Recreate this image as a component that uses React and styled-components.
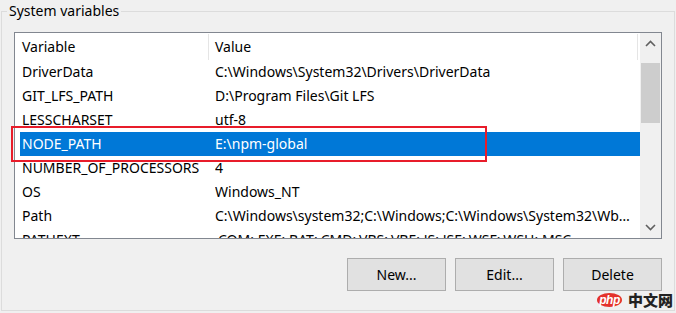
import React from 'react';
import styled, { createGlobalStyle } from 'styled-components';

const GlobalStyle = createGlobalStyle`
  html, body {
    margin: 0;
    padding: 0;
    background: #f0f0f0;
  }
  body {
    font-family: "Noto Sans", "Open Sans", sans-serif;
    font-size: 14px;
    color: #000;
  }
`;

const variables = [
  { name: 'DriverData', value: 'C:\\Windows\\System32\\Drivers\\DriverData' },
  { name: 'GIT_LFS_PATH', value: 'D:\\Program Files\\Git LFS' },
  { name: 'LESSCHARSET', value: 'utf-8' },
  { name: 'NODE_PATH', value: 'E:\\npm-global', selected: true },
  { name: 'NUMBER_OF_PROCESSORS', value: '4' },
  { name: 'OS', value: 'Windows_NT' },
  { name: 'Path', value: 'C:\\Windows\\system32;C:\\Windows;C:\\Windows\\System32\\Wbem;C:\\Windows\\System32\\WindowsPowerShell\\v1.0\\' },
  { name: 'PATHEXT', value: '.COM;.EXE;.BAT;.CMD;.VBS;.VBE;.JS;.JSE;.WSF;.WSH;.MSC' },
];

const Chevron = ({ up }) => (
  <svg width="11" height="7" viewBox="0 0 11 7">
    <polyline
      points={up ? '1,6 5.5,1.5 10,6' : '1,1 5.5,5.5 10,1'}
      fill="none"
      stroke="#606060"
      strokeWidth="1.6"
    />
  </svg>
);

export default function App() {
  return (
    <Page>
      <GlobalStyle />
      <GroupBox>
        <Legend>System variables</Legend>
        <Content>
          <ListBox>
            <Table>
              <HeaderRow>
                <HeaderCell width={194} pad={7}>Variable</HeaderCell>
                <HeaderCell width={429} pad={6}>Value</HeaderCell>
              </HeaderRow>
              {variables.map(v => (
                <Row key={v.name} selected={v.selected}>
                  <NameCell>{v.name}</NameCell>
                  <ValueCell>{v.value}</ValueCell>
                </Row>
              ))}
            </Table>
            <ScrollBar>
              <ScrollArrow><Chevron up /></ScrollArrow>
              <Track>
                <Thumb />
              </Track>
              <ScrollArrow><Chevron /></ScrollArrow>
            </ScrollBar>
          </ListBox>
          <Buttons>
            <Button>New...</Button>
            <Button>Edit...</Button>
            <Button>Delete</Button>
          </Buttons>
        </Content>
      </GroupBox>
      <Highlight />
      <Watermark>
        <PhpLogo>php</PhpLogo>
        <WatermarkText>中文网</WatermarkText>
      </Watermark>
    </Page>
  );
}

const Page = styled.div`
  position: relative;
  box-sizing: border-box;
  width: 676px;
  height: 313px;
  padding: 1px 1px 0;
  overflow: hidden;
`;

const GroupBox = styled.fieldset`
  margin: 0;
  min-width: 0;
  padding: 11px 12px 19px;
  border: 1px solid #dcdcdc;
`;

const Legend = styled.legend`
  margin-left: -7px;
  padding: 0 2px;
  line-height: 20px;
  font-size: 14px;
  color: #000;
`;

const Content = styled.div`
  display: flex;
  flex-direction: column;
  gap: 19px;
`;

const ListBox = styled.div`
  display: flex;
  box-sizing: border-box;
  height: 207px;
  border: 1px solid #828790;
  background: #fff;
  overflow: hidden;
`;

const Table = styled.div`
  flex: 1;
  min-width: 0;
  overflow: hidden;
`;

const HeaderRow = styled.div`
  display: flex;
  height: 27px;
`;

const HeaderCell = styled.div`
  box-sizing: border-box;
  width: ${p => p.width}px;
  height: 26px;
  margin-top: 1px;
  padding-left: ${p => p.pad}px;
  line-height: 26px;
  border-right: 1px solid #e5e5e5;
  white-space: nowrap;
`;

const Row = styled.div`
  display: flex;
  height: 24px;
  margin-left: 5px;
  line-height: 24px;
  white-space: nowrap;
  background: ${p => (p.selected ? '#0078d7' : 'transparent')};
  color: ${p => (p.selected ? '#fff' : '#000')};
`;

const NameCell = styled.div`
  box-sizing: border-box;
  flex: 0 0 195px;
  padding-left: 2px;
  overflow: hidden;
`;

const ValueCell = styled.div`
  flex: 1;
  min-width: 0;
  padding-right: 6px;
  overflow: hidden;
  text-overflow: ellipsis;
`;

const ScrollBar = styled.div`
  display: flex;
  flex-direction: column;
  flex: 0 0 21px;
  background: #f0f0f0;
`;

const ScrollArrow = styled.div`
  display: flex;
  align-items: center;
  justify-content: center;
  height: 21px;
`;

const Track = styled.div`
  flex: 1;
`;

const Thumb = styled.div`
  height: 60px;
  margin: 9px 1px 0;
  background: #cdcdcd;
`;

const Buttons = styled.div`
  display: flex;
  justify-content: flex-end;
  gap: 9px;
`;

const Button = styled.button`
  box-sizing: border-box;
  width: 99px;
  height: 33px;
  padding: 0;
  border: 1px solid #adadad;
  background: #e1e1e1;
  font-family: "Noto Sans", "Open Sans", sans-serif;
  font-size: 14px;
  color: #000;
`;

const Highlight = styled.div`
  position: absolute;
  left: 11px;
  top: 126px;
  box-sizing: border-box;
  width: 476px;
  height: 36px;
  border: 2px solid #e81c2a;
`;

const Watermark = styled.div`
  position: absolute;
  right: 3px;
  bottom: 6px;
  display: flex;
  align-items: center;
  gap: 6px;
`;

const PhpLogo = styled.span`
  display: inline-flex;
  align-items: center;
  justify-content: center;
  width: 25px;
  height: 14px;
  border-radius: 50%;
  background: #e4322b;
  color: #fff;
  font-family: "Liberation Sans", Arial, sans-serif;
  font-size: 12px;
  font-weight: 700;
  font-style: italic;
  letter-spacing: -0.5px;
`;

const WatermarkText = styled.span`
  font-family: "Noto Sans CJK SC", sans-serif;
  font-size: 15px;
  font-weight: 900;
  line-height: 15px;
  color: #222;
`;
